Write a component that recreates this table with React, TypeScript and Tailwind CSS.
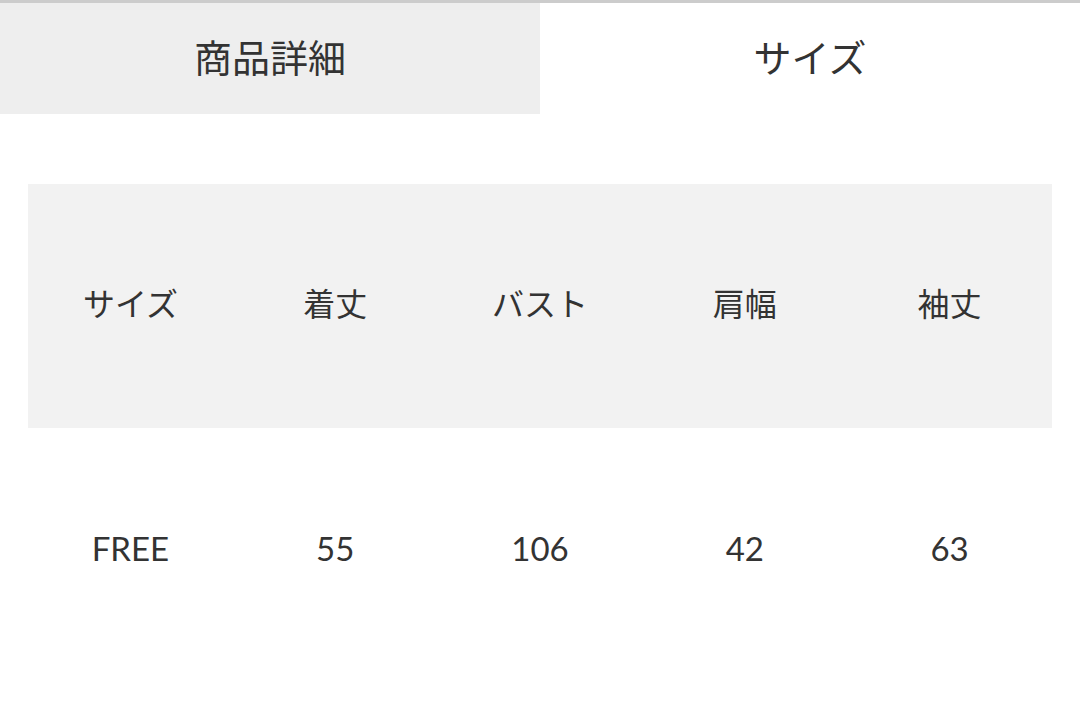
import React from "react";

const font = { fontFamily: '"Lato", "Noto Sans CJK JP", sans-serif' };

export default function App() {
  const heads = ["サイズ", "着丈", "バスト", "肩幅", "袖丈"];
  const vals = ["FREE", "55", "106", "42", "63"];
  return (
    <div className="w-[1080px] h-[712px] bg-white text-[#333333] overflow-hidden" style={font}>
      <div className="h-[3px] bg-[#cccccc]" />
      <div className="flex h-[111px]">
        <div className="w-[540px] bg-[#eeeeee] flex items-center justify-center text-[38px] pb-[3px]">商品詳細</div>
        <div className="flex-1 bg-white flex items-center justify-center text-[38px] pb-[3px]">サイズ</div>
      </div>
      <div className="px-[28px] pt-[70px]">
        <div className="grid grid-cols-5 h-[244px] bg-[#f2f2f2] items-center pb-[5px]">
          {heads.map((h) => (
            <div key={h} className="text-center text-[32px]">{h}</div>
          ))}
        </div>
        <div className="grid grid-cols-5 h-[244px] items-center pb-[2px]">
          {vals.map((v) => (
            <div key={v} className="text-center text-[33px]">{v}</div>
          ))}
        </div>
      </div>
    </div>
  );
}
